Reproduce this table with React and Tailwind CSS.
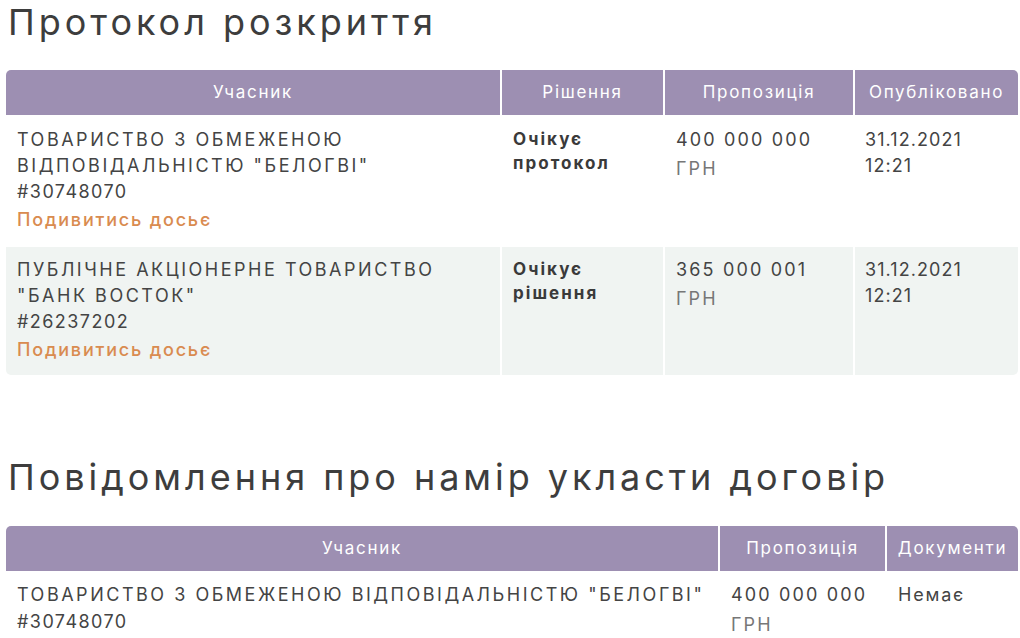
const font = { fontFamily: 'Inter, "Noto Sans", sans-serif' };

const protocolRows = [
  {
    name: 'ТОВАРИСТВО З ОБМЕЖЕНОЮ ВІДПОВІДАЛЬНІСТЮ "БЕЛОГВІ"',
    code: '#30748070',
    status: ['Очікує', 'протокол'],
    amount: '400 000 000',
    date: '31.12.2021',
    time: '12:21',
  },
  {
    name: 'ПУБЛІЧНЕ АКЦІОНЕРНЕ ТОВАРИСТВО "БАНК ВОСТОК"',
    code: '#26237202',
    status: ['Очікує', 'рішення'],
    amount: '365 000 001',
    date: '31.12.2021',
    time: '12:21',
  },
];

function HeaderCell({ children }) {
  return (
    <div className="bg-[#9d8fb2] text-white text-[17px] tracking-[0.1em] h-[45px] flex items-center justify-center">
      {children}
    </div>
  );
}

export default function App() {
  return (
    <div className="bg-white text-[#444] pl-[6px] pr-[2px]" style={font}>
      {/* Protocol */}
      <h2 className="text-[36px] leading-[44px] text-[#3d3d3d] pl-[2px] tracking-[0.11em]">Протокол розкриття</h2>

      <div className="mt-[26px] grid grid-cols-[494px_161px_188px_1fr] gap-x-[2px] gap-y-[2px] rounded-[5px] overflow-hidden">
        <HeaderCell>Учасник</HeaderCell>
        <HeaderCell>Рішення</HeaderCell>
        <HeaderCell>Пропозиція</HeaderCell>
        <HeaderCell>Опубліковано</HeaderCell>

        {protocolRows.map((row, i) => {
          const bg = i % 2 === 1 ? 'bg-[#f0f4f2]' : 'bg-white';
          return (
            <div key={row.code} className="contents">
              <div className={`${bg} px-[11px] pt-[10px] pb-[12px] text-[18px] leading-[26px]`}>
                <div className="tracking-[0.14em]">{row.name}</div>
                <div className="tracking-[0.08em]">{row.code}</div>
                <div className="mt-[2px] text-[#d98b50] font-medium tracking-[0.1em]">Подивитись досьє</div>
              </div>
              <div className={`${bg} px-[11px] pt-[10px] text-[17px] leading-[24px] font-bold text-[#3a3a3a] tracking-[0.12em]`}>
                <div>{row.status[0]}</div>
                <div>{row.status[1]}</div>
              </div>
              <div className={`${bg} px-[11px] pt-[10px] text-[18px] leading-[26px] tracking-[0.12em]`}>
                <div>{row.amount}</div>
                <div className="mt-[3px] text-[#777]">ГРН</div>
              </div>
              <div className={`${bg} px-[10px] pt-[10px] text-[18px] leading-[26px] tracking-[0.06em]`}>
                <div>{row.date}</div>
                <div>{row.time}</div>
              </div>
            </div>
          );
        })}
      </div>

      {/* Intent notice */}
      <h2 className="mt-[80px] text-[36px] leading-[44px] text-[#3d3d3d] pl-[2px] tracking-[0.11em]">
        Повідомлення про намір укласти договір
      </h2>

      <div className="mt-[27px] grid grid-cols-[712px_165px_1fr] gap-x-[2px] rounded-[5px] overflow-hidden">
        <HeaderCell>Учасник</HeaderCell>
        <HeaderCell>Пропозиція</HeaderCell>
        <HeaderCell>Документи</HeaderCell>

        <div className="px-[11px] pt-[10px] pb-[11px] text-[18px] leading-[27px]">
          <div className="tracking-[0.14em]">ТОВАРИСТВО З ОБМЕЖЕНОЮ ВІДПОВІДАЛЬНІСТЮ "БЕЛОГВІ"</div>
          <div className="tracking-[0.08em]">#30748070</div>
        </div>
        <div className="px-[11px] pt-[10px] text-[18px] leading-[27px] tracking-[0.12em]">
          <div>400 000 000</div>
          <div className="mt-[3px] text-[#777]">ГРН</div>
        </div>
        <div className="px-[11px] pt-[10px] text-[18px] leading-[27px] tracking-[0.1em]">Немає</div>
      </div>
    </div>
  );
}
